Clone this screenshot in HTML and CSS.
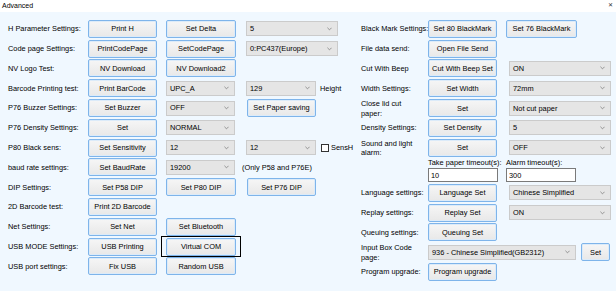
FILE: index.html
```html
<!DOCTYPE html>
<html>
<head>
    <title>Advanced</title>
    <link rel="stylesheet" href="styles.css">
</head>
<body>
    <div class="titlebar">
        <span class="title">Advanced</span>
        <span class="close">&#x2715;</span>
    </div>

    <div class="content">
        <!-- left column -->
        <div class="panel-left">
            <div class="row">
                <span class="label">H Parameter Settings:</span>
                <button class="btn">Print H</button>
                <button class="btn btn-mid">Set Delta</button>
                <div class="combo combo-wide"><span>5</span><svg class="chev" viewBox="0 0 6 4"><path d="M0.5 0.5 L3 3 L5.5 0.5"/></svg></div>
            </div>
            <div class="row">
                <span class="label">Code page Settings:</span>
                <button class="btn">PrintCodePage</button>
                <button class="btn btn-mid">SetCodePage</button>
                <div class="combo combo-wide"><span>0:PC437(Europe)</span><svg class="chev" viewBox="0 0 6 4"><path d="M0.5 0.5 L3 3 L5.5 0.5"/></svg></div>
            </div>
            <div class="row">
                <span class="label">NV Logo Test:</span>
                <button class="btn">NV Download</button>
                <button class="btn btn-mid">NV Download2</button>
            </div>
            <div class="row">
                <span class="label">Barcode Printing test:</span>
                <button class="btn">Print BarCode</button>
                <div class="combo combo-mid"><span>UPC_A</span><svg class="chev" viewBox="0 0 6 4"><path d="M0.5 0.5 L3 3 L5.5 0.5"/></svg></div>
                <div class="cell-flex">
                    <div class="combo combo-narrow"><span>129</span><svg class="chev" viewBox="0 0 6 4"><path d="M0.5 0.5 L3 3 L5.5 0.5"/></svg></div>
                    <span class="note">Height</span>
                </div>
            </div>
            <div class="row">
                <span class="label">P76 Buzzer Settings:</span>
                <button class="btn">Set Buzzer</button>
                <div class="combo combo-mid"><span>OFF</span><svg class="chev" viewBox="0 0 6 4"><path d="M0.5 0.5 L3 3 L5.5 0.5"/></svg></div>
                <button class="btn btn-third">Set Paper saving</button>
            </div>
            <div class="row">
                <span class="label">P76 Density Settings:</span>
                <button class="btn">Set</button>
                <div class="combo combo-mid"><span>NORMAL</span><svg class="chev" viewBox="0 0 6 4"><path d="M0.5 0.5 L3 3 L5.5 0.5"/></svg></div>
            </div>
            <div class="row">
                <span class="label">P80 Black sens:</span>
                <button class="btn">Set Sensitivity</button>
                <div class="combo combo-mid"><span>12</span><svg class="chev" viewBox="0 0 6 4"><path d="M0.5 0.5 L3 3 L5.5 0.5"/></svg></div>
                <div class="cell-flex">
                    <div class="combo combo-narrow"><span>12</span><svg class="chev" viewBox="0 0 6 4"><path d="M0.5 0.5 L3 3 L5.5 0.5"/></svg></div>
                    <label class="check"><span class="box"></span>SensH</label>
                </div>
            </div>
            <div class="row">
                <span class="label">baud rate settings:</span>
                <button class="btn">Set BaudRate</button>
                <div class="combo combo-mid"><span>19200</span><svg class="chev" viewBox="0 0 6 4"><path d="M0.5 0.5 L3 3 L5.5 0.5"/></svg></div>
                <span class="note note-only">(Only P58 and P76E)</span>
            </div>
            <div class="row">
                <span class="label">DIP Settings:</span>
                <button class="btn">Set P58 DIP</button>
                <button class="btn btn-mid">Set P80 DIP</button>
                <button class="btn btn-third">Set P76 DIP</button>
            </div>
            <div class="row">
                <span class="label">2D Barcode test:</span>
                <button class="btn">Print 2D Barcode</button>
            </div>
            <div class="row">
                <span class="label">Net Settings:</span>
                <button class="btn">Set Net</button>
                <button class="btn btn-mid">Set Bluetooth</button>
            </div>
            <div class="row">
                <span class="label">USB MODE Settings:</span>
                <button class="btn">USB Printing</button>
                <button class="btn btn-mid highlight">Virtual COM</button>
            </div>
            <div class="row">
                <span class="label">USB port settings:</span>
                <button class="btn">Fix USB</button>
                <button class="btn btn-mid">Random USB</button>
            </div>
        </div>

        <!-- right column -->
        <div class="panel-right">
            <div class="rrow">
                <span class="label">Black Mark Settings:</span>
                <button class="btn">Set 80 BlackMark</button>
                <button class="btn btn-side">Set 76 BlackMark</button>
            </div>
            <div class="rrow">
                <span class="label">File data send:</span>
                <button class="btn">Open File Send</button>
            </div>
            <div class="rrow">
                <span class="label">Cut With Beep</span>
                <button class="btn">Cut With Beep Set</button>
                <div class="combo combo-right"><span>ON</span><svg class="chev" viewBox="0 0 6 4"><path d="M0.5 0.5 L3 3 L5.5 0.5"/></svg></div>
            </div>
            <div class="rrow">
                <span class="label">Width Settings:</span>
                <button class="btn">Set Width</button>
                <div class="combo combo-right"><span>72mm</span><svg class="chev" viewBox="0 0 6 4"><path d="M0.5 0.5 L3 3 L5.5 0.5"/></svg></div>
            </div>
            <div class="rrow">
                <span class="label two-line">Close lid cut<br>paper:</span>
                <button class="btn">Set</button>
                <div class="combo combo-right"><span>Not cut paper</span><svg class="chev" viewBox="0 0 6 4"><path d="M0.5 0.5 L3 3 L5.5 0.5"/></svg></div>
            </div>
            <div class="rrow">
                <span class="label">Density Settings:</span>
                <button class="btn">Set Density</button>
                <div class="combo combo-right"><span>5</span><svg class="chev" viewBox="0 0 6 4"><path d="M0.5 0.5 L3 3 L5.5 0.5"/></svg></div>
            </div>
            <div class="rrow">
                <span class="label two-line">Sound and light<br>alarm:</span>
                <button class="btn">Set</button>
                <div class="combo combo-right"><span>OFF</span><svg class="chev" viewBox="0 0 6 4"><path d="M0.5 0.5 L3 3 L5.5 0.5"/></svg></div>
            </div>

            <div class="timeouts">
                <span class="tlabel">Take paper timeout(s):</span>
                <span class="tlabel">Alarm timeout(s):</span>
                <input class="field" type="text" value="10">
                <input class="field" type="text" value="300">
            </div>

            <div class="rrow">
                <span class="label">Language settings:</span>
                <button class="btn">Language Set</button>
                <div class="combo combo-right"><span>Chinese Simplified</span><svg class="chev" viewBox="0 0 6 4"><path d="M0.5 0.5 L3 3 L5.5 0.5"/></svg></div>
            </div>
            <div class="rrow">
                <span class="label">Replay settings:</span>
                <button class="btn">Replay Set</button>
                <div class="combo combo-right"><span>ON</span><svg class="chev" viewBox="0 0 6 4"><path d="M0.5 0.5 L3 3 L5.5 0.5"/></svg></div>
            </div>
            <div class="rrow">
                <span class="label">Queuing settings:</span>
                <button class="btn">Queuing Set</button>
            </div>
            <div class="rrow rrow-code">
                <span class="label two-line">Input Box Code<br>page:</span>
                <div class="combo combo-code"><span>936 - Chinese Simplified(GB2312)</span><svg class="chev" viewBox="0 0 6 4"><path d="M0.5 0.5 L3 3 L5.5 0.5"/></svg></div>
                <button class="btn btn-small">Set</button>
            </div>
            <div class="rrow">
                <span class="label">Program upgrade:</span>
                <button class="btn">Program upgrade</button>
            </div>
        </div>
    </div>
</body>
</html>
```

FILE: styles.css
```css
/* --- BASE --- */
:root {
    --bg-color: #f0f8ff;
    --text-color: #000;
    --btn-border: #7eb4ea;
    --combo-bg: #e5e5e5;
    --combo-border: #cbcbcb;
}

body {
    margin: 0;
    background-color: var(--bg-color);
    color: var(--text-color);
    font-family: "Liberation Sans", Arial, sans-serif;
    font-size: 7.4px;
    line-height: 9.5px;
}

/* --- TITLE BAR --- */
.titlebar {
    height: 12px;
    background: #fff;
    display: flex;
    justify-content: space-between;
    align-items: center;
    padding: 0 3px 0 2px;
}
.title { font-size: 7px; }
.close { font-size: 6px; color: #333; }

/* --- LAYOUT --- */
.content {
    display: flex;
    padding-top: 7px;
}
.panel-left { width: 353px; padding-left: 8px; }
.panel-right { flex: 1; }

.row {
    display: grid;
    grid-template-columns: 80px 78px 80px auto;
    align-items: center;
    height: 19.8px;
}
.rrow {
    display: grid;
    grid-template-columns: 67px 78px auto;
    align-items: center;
    height: 19.8px;
}
.rrow-code { grid-template-columns: 67px 154px auto; }

.label { white-space: nowrap; }
.two-line { line-height: 9.6px; padding-top: 1px; }

/* --- BUTTONS --- */
.btn {
    width: 69px;
    height: 18px;
    padding: 0;
    margin: 0;
    font: inherit;
    color: var(--text-color);
    white-space: nowrap;
    border: 1px solid var(--btn-border);
    border-radius: 2px;
    background: linear-gradient(#f6f6f6, #e8e8e8);
    box-shadow: inset 0 0 0 1px #dcebf9;
    justify-self: start;
}
.btn-mid { width: 70px; }
.btn-third { width: 69px; margin-left: 1px; }
.btn-side { width: 71px; margin-left: 0; }
.btn-small { width: 29px; margin-left: -1px; }

.highlight { position: relative; }
.highlight::after {
    content: "";
    position: absolute;
    left: -6px;
    right: -6px;
    top: -3px;
    bottom: -2px;
    border: 1.4px solid #000;
}

/* --- COMBOS --- */
.combo {
    height: 15px;
    box-sizing: border-box;
    background: var(--combo-bg);
    border: 1px solid var(--combo-border);
    display: flex;
    align-items: center;
    justify-content: space-between;
    padding: 0 5px 0 3px;
    white-space: nowrap;
    justify-self: start;
}
.chev { width: 5px; height: 4px; fill: none; stroke: #777; stroke-width: 0.9; }
.combo-wide { width: 92px; }
.combo-mid { width: 69px; }
.combo-narrow { width: 70px; }
.combo-right { width: 102px; margin-left: 3px; }
.combo-code { width: 148px; }

.cell-flex { display: flex; align-items: center; }
.note { margin-left: 4px; }
.note-only { margin-left: -4px; }

.check { display: flex; align-items: center; margin-left: 5px; }
.check .box {
    width: 6px;
    height: 6px;
    border: 1px solid #333;
    background: #fff;
    margin-right: 2px;
}

/* --- TIMEOUTS --- */
.timeouts {
    display: grid;
    grid-template-columns: 78px 78px;
    grid-template-rows: 9.5px 14px;
    row-gap: 1px;
    padding-left: 67px;
    height: 25.4px;
    align-items: center;
}
.tlabel { white-space: nowrap; }
.field {
    width: 70px;
    height: 14px;
    box-sizing: border-box;
    padding: 0 2px;
    margin: 0;
    font: inherit;
    border: 1px solid #7a7a7a;
    background: #fff;
}
```
